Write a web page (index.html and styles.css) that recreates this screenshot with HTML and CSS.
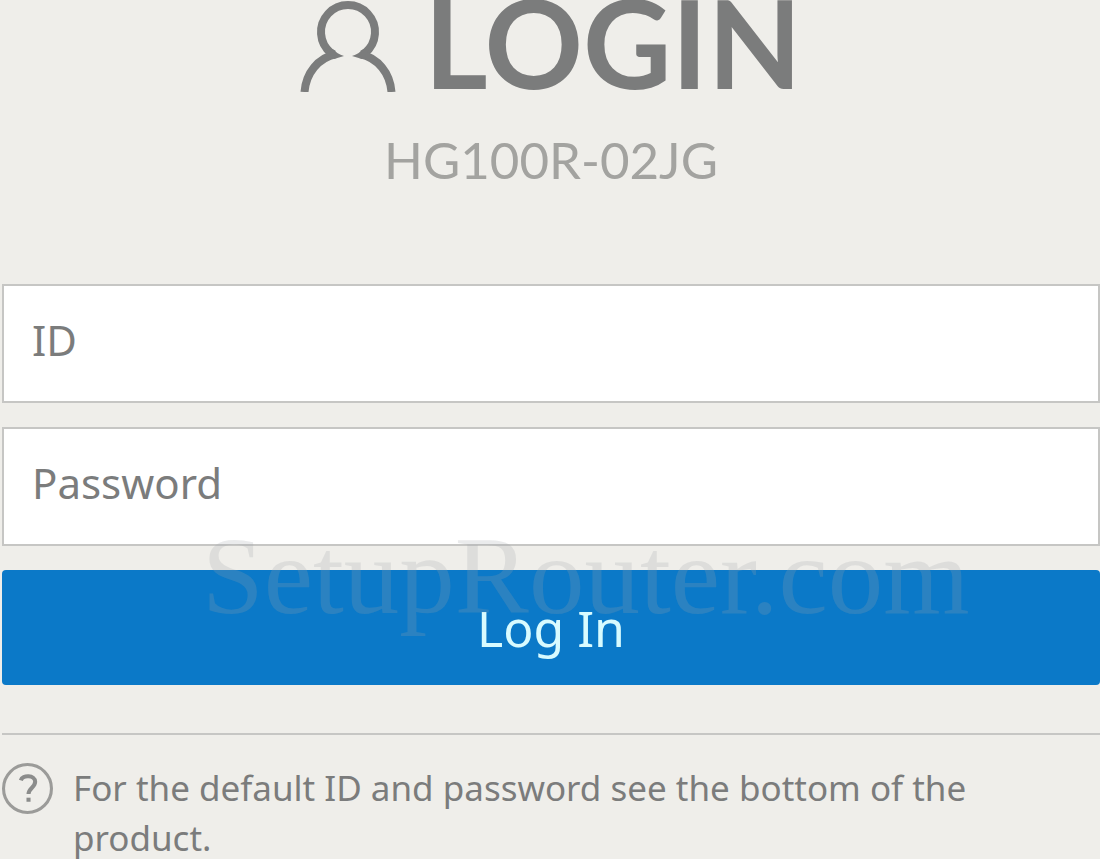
FILE: index.html
```html
<!DOCTYPE html>
<html lang="en">
<head>
<meta charset="utf-8">
<meta name="viewport" content="width=device-width, initial-scale=1">
<title>Login</title>
<link rel="stylesheet" href="styles.css">
</head>
<body>
<main class="login">
  <header class="head">
    <h1 class="title">
      <svg class="user-icon" viewBox="0 0 96 92" aria-hidden="true">
        <path d="M31 53A27 27 0 1 1 65 53" />
        <path d="M4.500 92C6 73 18 58 36 54M91.500 92C90 73 78 58 60 54" />
        <path class="user-tip" d="M27 50L33 49Q37 54 44 56L34 59ZM69 50L63 49Q59 54 52 56L62 59Z" />
      </svg>
      <span>LOGIN</span>
    </h1>
    <p class="model">HG100R-02JG</p>
  </header>
  <form class="form">
    <input class="field" type="text" name="id" placeholder="ID" aria-label="ID">
    <input class="field" type="password" name="password" placeholder="Password" aria-label="Password">
    <div class="action">
      <button class="submit" type="submit">Log In</button>
      <span class="watermark">SetupRouter.com</span>
    </div>
  </form>
  <footer class="help">
    <svg class="help-icon" viewBox="0 0 50 50" aria-hidden="true">
      <circle cx="25" cy="25" r="23.5" />
      <path d="M18.500 17C20 11.500 32.500 11.500 32.500 18.500C32.500 24 26 24.500 26 30.500" />
      <path d="M26 34v4" />
    </svg>
    <p class="help-text">For the default ID and password see the bottom of the product.</p>
  </footer>
</main>
</body>
</html>
```
FILE: styles.css
```css
* {
  box-sizing: border-box;
}

body {
  margin: 0;
  background: #efeeea;
  color: #7b7c7c;
  font-family: "Noto Sans", sans-serif;
}

.login {
  padding-left: 2px;
}

.head {
  display: flex;
  flex-direction: column;
  align-items: center;
  gap: 38px;
  font-family: Lato, sans-serif;
}

.title {
  display: flex;
  gap: 28px;
  margin: 0;
  font-size: 122px;
  font-weight: 700;
  line-height: 84px;
}

.user-icon {
  width: 96px;
  height: 92px;
  fill: none;
  stroke: #7b7c7c;
  stroke-width: 8px;
}

.user-tip {
  fill: #7b7c7c;
  stroke: none;
}

.model {
  margin: 0;
  color: #a3a3a0;
  font-size: 51px;
  line-height: 60px;
}

.form {
  display: flex;
  flex-direction: column;
  gap: 24px;
  margin-top: 94px;
}

.field {
  width: 100%;
  height: 119px;
  padding: 0 28px 8px;
  border: 2px solid #c6c6c4;
  border-radius: 0;
  background: #fff;
  color: #7b7c7c;
  font: 42px "Noto Sans", sans-serif;
}

.field::placeholder {
  color: #7b7c7c;
  opacity: 1;
}

.action {
  position: relative;
}

.submit {
  display: block;
  width: 100%;
  height: 115px;
  padding: 0;
  border: 0;
  border-radius: 4px;
  background: #0b79c8;
  color: #d8fbff;
  font: 50px "Noto Sans", sans-serif;
}

.watermark {
  position: absolute;
  top: -56px;
  left: 200px;
  color: rgba(160, 165, 170, 0.22);
  font: 111px/124px "Liberation Serif", serif;
  pointer-events: none;
}

.help {
  display: flex;
  gap: 20px;
  margin-top: 48px;
  padding-top: 28px;
  border-top: 2px solid #c6c6c4;
}

.help-icon {
  flex: none;
  width: 51px;
  height: 51px;
  fill: none;
  stroke: #9b9b99;
  stroke-width: 3px;
}

.help-icon path {
  stroke: #8b8c8b;
  stroke-width: 4px;
}

.help-text {
  margin: 0;
  font-size: 35px;
  line-height: 50px;
}
```
